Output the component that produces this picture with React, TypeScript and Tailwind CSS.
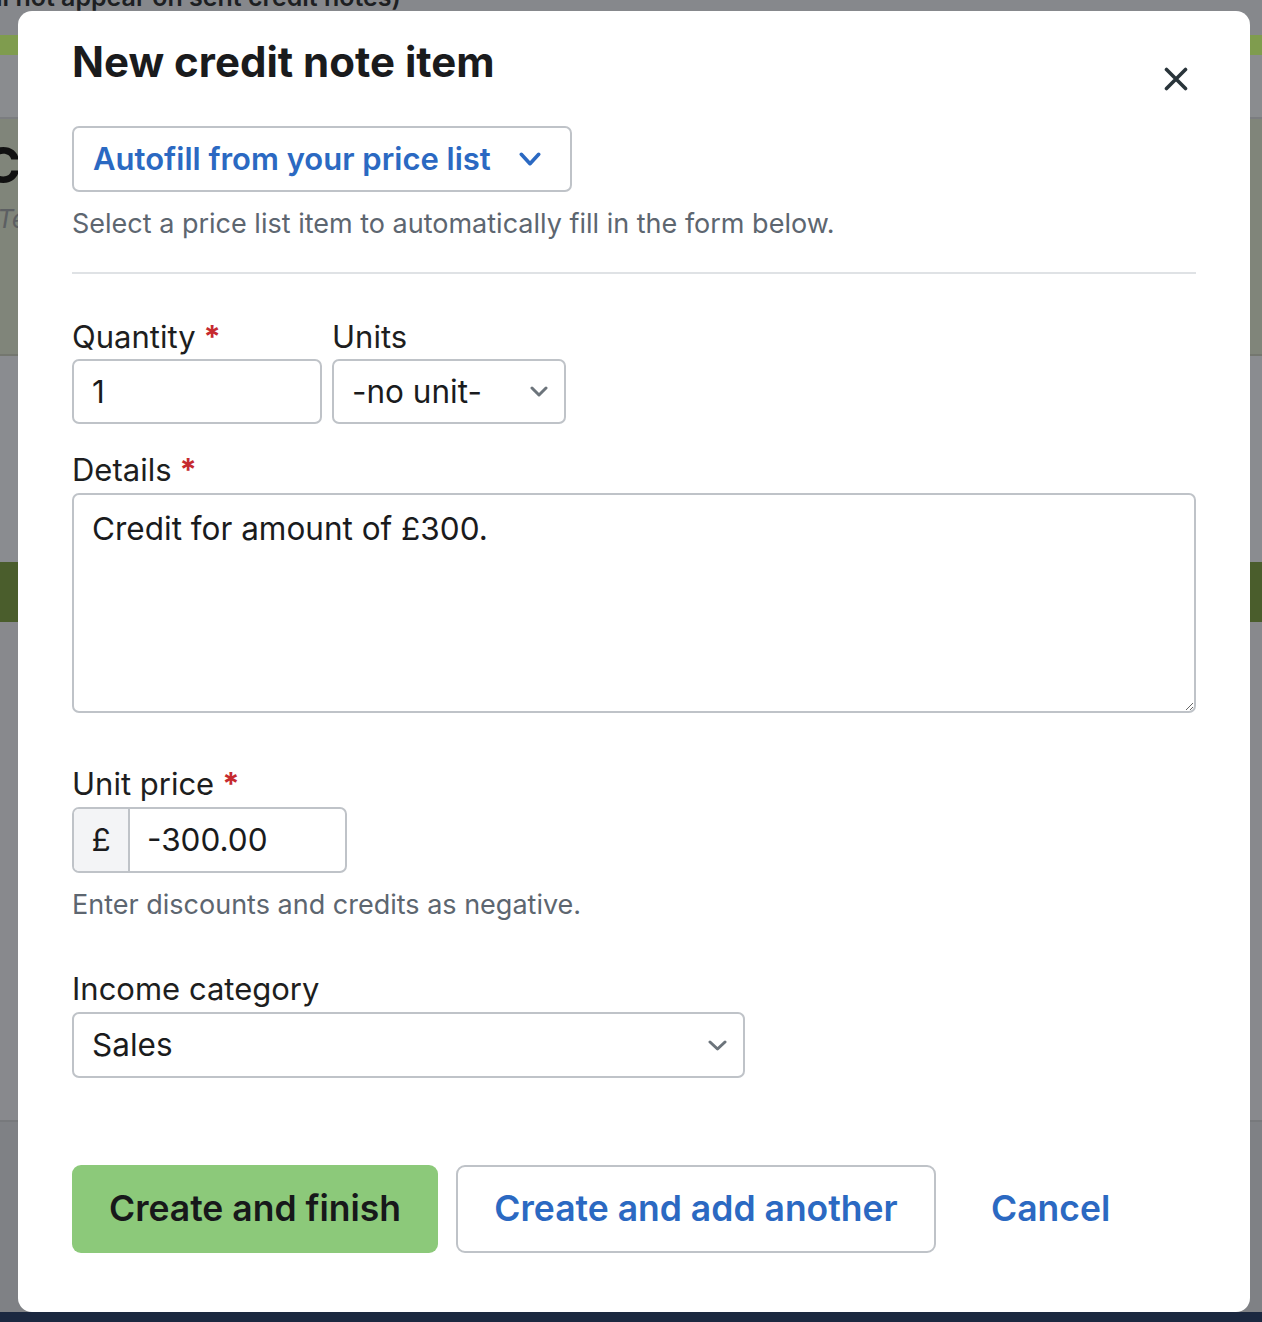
import React from "react";

const Chevron = ({ className, color, w = 18, h = 10, sw = 3 }: { className?: string; color: string; w?: number; h?: number; sw?: number }) => (
  <svg width={w} height={h} viewBox={`0 0 ${w} ${h}`} className={className} fill="none">
    <polyline points={`${sw / 2 + 0.5},${sw / 2 + 0.5} ${w / 2},${h - sw / 2 - 0.5} ${w - sw / 2 - 0.5},${sw / 2 + 0.5}`} stroke={color} strokeWidth={sw} strokeLinecap="round" strokeLinejoin="round" />
  </svg>
);

const Req = () => <span className="text-[#c62a2f] ml-[8px] font-bold">*</span>;

export default function App() {
  return (
    <div className="relative w-[1262px] h-[1322px] overflow-hidden bg-[#86888c] font-['Inter',sans-serif]">
      {/* dimmed page behind the modal */}
      <div className="flex flex-col w-full h-full">
        <div className="h-[35px] bg-[#86888c] overflow-hidden">
          <div className="-mt-[19px] text-[25px] font-semibold text-[#1d1f22] leading-[32px] -ml-[4px] whitespace-nowrap">ll not appear on sent credit notes)</div>
        </div>
        <div className="h-[20px] bg-[#7f9c4e]" />
        <div className="h-[64px] bg-[#8a8c8f] border-b-2 border-[#7b7d80]" />
        <div className="h-[237px] bg-[#80857a] border-b-2 border-[#74776f] flex flex-col overflow-hidden">
          <div className="mt-[16px] text-[50px] font-bold leading-[60px] text-[#111] -ml-[16px] whitespace-nowrap">C</div>
          <div className="mt-[8px] text-[26px] italic text-[#5c5f62] leading-[32px] -ml-[3px] whitespace-nowrap">Te</div>
        </div>
        <div className="h-[206px] bg-[#8a8c90]" />
        <div className="h-[60px] bg-[#4a5d2c]" />
        <div className="h-[500px] bg-[#88898d] border-b-2 border-[#77797c]" />
        <div className="flex-1 bg-[#7f8185]" />
        <div className="h-[10px] bg-[#1b2840]" />
      </div>

      {/* modal */}
      <div className="absolute left-[18px] top-[11px] w-[1232px] h-[1301px] rounded-[14px] bg-white px-[54px] pt-[27px] flex flex-col">
        <div className="flex justify-between items-start h-[48px]">
          <h1 className="text-[42px] leading-[48px] font-bold text-[#1a1b1d]">New credit note item</h1>
          <button className="mt-[29px] mr-[8px]" aria-label="Close">
            <svg width="24" height="24" viewBox="0 0 24 24" fill="none">
              <path d="M2.5 2.5 L21.5 21.5 M21.5 2.5 L2.5 21.5" stroke="#29343a" strokeWidth="3.6" strokeLinecap="round" />
            </svg>
          </button>
        </div>

        <button className="mt-[40px] w-[500px] h-[66px] rounded-[7px] border-2 border-[#bfc3c8] flex items-center px-[19px] text-[#2b69c2] text-[31px] font-semibold whitespace-nowrap">
          <span>Autofill from your price list</span>
          <Chevron className="ml-[28px]" color="#2b69c2" w={22} h={14} sw={3.6} />
        </button>
        <p className="mt-[14px] text-[27px] leading-[36px] text-[#5d6670]">Select a price list item to automatically fill in the form below.</p>
        <div className="mt-[30px] h-[2px] bg-[#dfe2e5]" />

        <div className="mt-[45px] flex gap-[10px]">
          <div className="flex flex-col w-[250px]">
            <label className="text-[31px] leading-[36px] text-[#1d1e20]">Quantity<Req /></label>
            <div className="mt-[4px] h-[65px] rounded-[7px] border-2 border-[#bfc3c8] flex items-center px-[18px] text-[31.5px] text-[#1a1b1d]">1</div>
          </div>
          <div className="flex flex-col w-[234px]">
            <label className="text-[31px] leading-[36px] text-[#1d1e20]">Units</label>
            <div className="mt-[4px] h-[65px] rounded-[7px] border-2 border-[#bfc3c8] flex items-center justify-between pl-[18px] pr-[16px] text-[31.5px] text-[#1a1b1d]">
              <span>-no unit-</span>
              <Chevron color="#6c747b" w={18} h={11} sw={3} />
            </div>
          </div>
        </div>

        <label className="mt-[28px] text-[31px] leading-[36px] text-[#1d1e20]">Details<Req /></label>
        <textarea
          readOnly
          defaultValue="Credit for amount of £300."
          className="mt-[5px] h-[220px] w-full rounded-[7px] border-2 border-[#bfc3c8] px-[18px] pt-[14px] text-[31.5px] leading-[40px] text-[#1a1b1d] resize-y outline-none font-['Inter',sans-serif]"
        />

        <label className="mt-[53px] text-[31px] leading-[36px] text-[#1d1e20]">Unit price<Req /></label>
        <div className="mt-[5px] w-[275px] h-[66px] rounded-[7px] border-2 border-[#bfc3c8] flex overflow-hidden">
          <div className="w-[56px] bg-[#f3f4f6] border-r-2 border-[#bfc3c8] flex items-center justify-center text-[31.5px] text-[#1a1b1d]">£</div>
          <div className="flex-1 flex items-center pl-[17px] text-[31.5px] text-[#1a1b1d]">-300.00</div>
        </div>
        <p className="mt-[14px] text-[27px] leading-[36px] text-[#5d6670]">Enter discounts and credits as negative.</p>

        <label className="mt-[48px] text-[31px] leading-[36px] text-[#1d1e20]">Income category</label>
        <div className="mt-[5px] w-[673px] h-[66px] rounded-[7px] border-2 border-[#bfc3c8] flex items-center justify-between pl-[18px] pr-[16px] text-[31.5px] text-[#1a1b1d]">
          <span>Sales</span>
          <Chevron color="#6c747b" w={19} h={11} sw={3} />
        </div>

        <div className="mt-[87px] flex items-center">
          <button className="w-[366px] h-[88px] rounded-[9px] bg-[#8cc97a] text-[35.5px] font-semibold text-[#17181a]">Create and finish</button>
          <button className="ml-[18px] w-[480px] h-[88px] rounded-[9px] border-2 border-[#bfc3c8] text-[35.5px] font-semibold text-[#2b69c2]">Create and add another</button>
          <button className="ml-[55px] text-[35.5px] font-semibold text-[#2b69c2]">Cancel</button>
        </div>
      </div>
    </div>
  );
}
